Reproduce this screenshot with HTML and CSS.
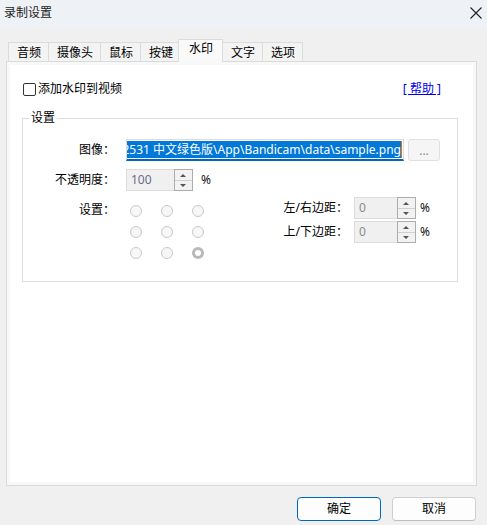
FILE: index.html
```html
<!DOCTYPE html>
<html lang="zh-CN">
<head>
    <meta charset="UTF-8">
    <title>录制设置</title>
    <link rel="stylesheet" href="styles.css">
</head>
<body>
<div class="titlebar">
    <span class="title">录制设置</span>
    <svg class="close" width="12" height="12" viewBox="0 0 12 12">
        <path d="M0.5 0.5 L11.5 11.5 M11.5 0.5 L0.5 11.5" stroke="#222" stroke-width="1.1" fill="none"/>
    </svg>
</div>
<div class="tabs">
    <span class="tab">音频</span>
    <span class="tab">摄像头</span>
    <span class="tab">鼠标</span>
    <span class="tab">按键</span>
    <span class="tab active">水印</span>
    <span class="tab">文字</span>
    <span class="tab">选项</span>
</div>
<div class="panel">
    <div class="page">
        <div class="toprow">
            <label class="check"><span class="box"></span>添加水印到视频</label>
            <a class="help">[ 帮助 ]</a>
        </div>
        <fieldset class="group">
            <legend>设置</legend>
            <div class="row">
                <span class="lbl">图像：</span>
                <div class="path"><span class="sel">.2531 中文绿色版\App\Bandicam\data\sample.png</span><i class="caret"></i></div>
                <span class="browse">...</span>
            </div>
            <div class="row">
                <span class="lbl">不透明度：</span>
                <div class="spin wide">
                    <span class="val">100</span>
                    <span class="arrows"><b class="up"></b><b class="down"></b></span>
                </div>
                <span class="pct">%</span>
            </div>
            <div class="row pos">
                <span class="lbl lbl-pos">设置：</span>
                <div class="radios">
                    <span class="radio"></span><span class="radio"></span><span class="radio"></span>
                    <span class="radio"></span><span class="radio"></span><span class="radio"></span>
                    <span class="radio"></span><span class="radio"></span><span class="radio on"></span>
                </div>
                <div class="margins">
                    <div class="mrow">
                        <span class="mlbl">左/右边距：</span>
                        <div class="spin">
                            <span class="val">0</span>
                            <span class="arrows"><b class="up"></b><b class="down"></b></span>
                        </div>
                        <span class="pct near">%</span>
                    </div>
                    <div class="mrow">
                        <span class="mlbl">上/下边距：</span>
                        <div class="spin">
                            <span class="val">0</span>
                            <span class="arrows"><b class="up"></b><b class="down"></b></span>
                        </div>
                        <span class="pct near">%</span>
                    </div>
                </div>
            </div>
        </fieldset>
    </div>
</div>
<div class="footer">
    <button class="btn primary">确定</button>
    <button class="btn">取消</button>
</div>
</body>
</html>
```

FILE: styles.css
```css
/* reset */
body,fieldset,legend,button{margin:0;padding:0}
body{
    font:12px/14px "Noto Sans", "Noto Sans CJK SC", sans-serif;
    color:#000;
    background:#f0f0f0;
    width:487px;
    height:525px;
    overflow:hidden;
}

/* title bar */
.titlebar{
    height:27px;
    background:#eef2f6;
    display:flex;
    align-items:center;
    justify-content:space-between;
    padding:0 5px 2px 4px;
    box-sizing:border-box;
}
.title{color:#1b1b1b;}

/* tabs */
.tabs{
    display:flex;
    align-items:flex-end;
    height:34px;
    padding-left:8px;
    position:relative;
    z-index:1;
}
.tab{
    height:19px;
    line-height:19px;
    padding:0 7px 0 8px;
    margin-right:-1px;
    border:1px solid #dcdcdc;
    border-bottom:0;
    background:#f3f3f3;
    box-sizing:border-box;
}
.tab.active{
    height:23px;
    line-height:18px;
    padding:0 9px 0 10px;
    margin:0 -1px -1px -2px;
    background:#f9f9f9;
    position:relative;
}

/* panel */
.panel{
    margin-left:6px;
    width:471px;
    height:425px;
    border:1px solid #dadada;
    background:#f8f8f8;
    padding:3px;
    box-sizing:border-box;
}
.page{
    background:#fff;
    height:100%;
    padding:17px 32px 0 13px;
    box-sizing:border-box;
}
.toprow{
    display:flex;
    justify-content:space-between;
    align-items:center;
    height:14px;
}
.check{display:flex;align-items:center;}
.box{
    width:11px;
    height:11px;
    border:1px solid #333;
    border-radius:2px;
    margin-right:2px;
}
.help{
    color:#0000ee;
    text-decoration:underline;
}

/* group */
.group{
    margin:15px -17px 0 -1px;
    border:1px solid #dcdcdc;
    padding:14px 0 22px 0;
}
.group legend{
    margin-left:6px;
    padding:0 2px;
    line-height:14px;
}
.row{
    display:flex;
    align-items:center;
    height:22px;
    margin-bottom:8px;
}
.lbl{
    width:92px;
    text-align:right;
    margin-right:11px;
}
.path{
    width:278px;
    height:22px;
    border:1px solid #dcdcdc;
    border-bottom:2px solid #0067c0;
    box-sizing:border-box;
    display:flex;
    justify-content:flex-end;
    align-items:center;
    overflow:hidden;
    padding-right:1px;
}
.sel{
    white-space:nowrap;
    background:#0078d7;
    color:#fff;
    line-height:17px;
}
.caret{
    display:block;
    width:1px;
    height:17px;
    background:#d77a00;
    flex:none;
}
.browse{
    margin-left:4px;
    width:32px;
    height:22px;
    border:1px solid #e0e0e0;
    border-radius:3px;
    background:#f5f5f5;
    box-sizing:border-box;
    color:#888;
    text-align:center;
    line-height:22px;
}

/* spin boxes */
.spin{
    width:62px;
    height:22px;
    border:1px solid #dcdcdc;
    background:#f0f0f0;
    box-sizing:border-box;
    display:flex;
    justify-content:space-between;
}
.spin.wide{width:67px;}
.val{
    padding-left:4px;
    line-height:20px;
}
.spin .val{color:#8a8a8a;}
.spin.wide .val{color:#6b6b8a;}
.arrows{
    width:17px;
    display:flex;
    flex-direction:column;
    border:1px solid #adadad;
    margin:-1px -1px -1px 0;
}
.arrows b{
    flex:1;
    background:#f2f2f2;
    position:relative;
}
.arrows .up{border-bottom:1px solid #cfcfcf;}
.arrows b:after{
    content:"";
    position:absolute;
    left:5px;
    border:3px solid transparent;
}
.arrows .up:after{border-bottom:3px solid #555;top:1px;}
.arrows .down:after{border-top:3px solid #555;top:3px;}
.pct{margin-left:8px;color:#111;}
.pct.near{margin-left:4px;}

/* position grid */
.row.pos{
    align-items:flex-start;
    height:auto;
    margin:-2px 0 0 0;
}
.lbl-pos{margin-top:6px;}
.radios{
    display:grid;
    grid-template-columns:repeat(3,12px);
    grid-auto-rows:12px;
    column-gap:19px;
    row-gap:9px;
    margin:8px 0 0 4px;
}
.radio{
    border:1px solid #c9c9c9;
    border-radius:50%;
    background:#f7f7f7;
    box-sizing:border-box;
}
.radio.on{
    border:3px solid #b9b9b9;
    background:#fff;
}
.margins{margin-left:70px;}
.mrow{
    display:flex;
    align-items:center;
    margin-bottom:2px;
}
.mlbl{
    width:74px;
    text-align:right;
    margin-right:6px;
}

/* footer */
.footer{
    display:flex;
    justify-content:flex-end;
    gap:11px;
    padding:11px 11px 0 0;
}
.btn{
    width:84px;
    height:24px;
    font:inherit;
    color:#000;
    background:#fdfdfd;
    border:1px solid #d0d0d0;
    border-bottom-color:#bdbdbd;
    border-radius:4px;
}
.btn.primary{
    border:1px solid #0067c0;
}
```
